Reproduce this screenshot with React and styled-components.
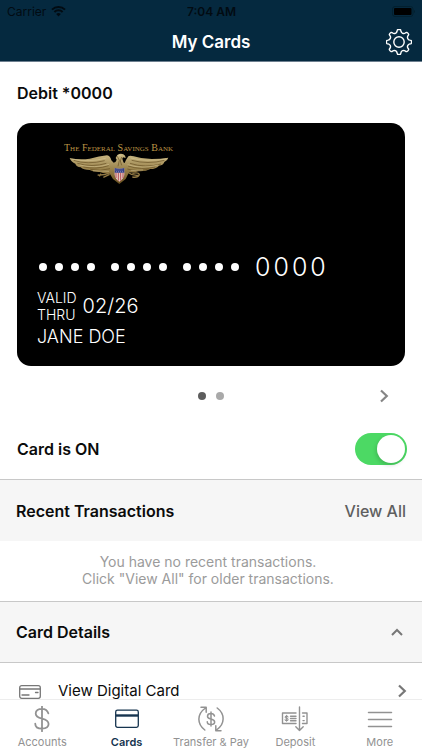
import React, { useState } from "react";
import styled, { createGlobalStyle } from "styled-components";

const GlobalStyle = createGlobalStyle`
  *, *::before, *::after { box-sizing: border-box; }
  body {
    margin: 0;
    background: #fff;
    color: #0b0b0b;
    font-family: Inter, "Liberation Sans", sans-serif;
  }
  h1, h2, p, ul { margin: 0; padding: 0; }
  button { font: inherit; color: inherit; background: none; border: 0; padding: 0; cursor: pointer; }
  a { color: inherit; text-decoration: none; }
  svg { display: block; flex: none; }
`;

const Screen = styled.div`
  display: flex;
  flex-direction: column;
  height: 100vh;
  overflow: hidden;
`;

const Header = styled.header`
  flex: none;
  background: #05293f;
  border-bottom: 1px solid #6d7f8f;
`;

const StatusBar = styled.div`
  display: grid;
  grid-template-columns: 1fr auto 1fr;
  align-items: center;
  height: 22px;
  padding: 0 6px 0 7px;
  color: #020b12;
  font-size: 12px;
`;

const Carrier = styled.span`
  display: flex;
  align-items: center;
  gap: 5px;
`;

const Clock = styled.time`
  font-weight: 600;
`;

const Battery = styled.span`
  justify-self: end;
`;

const TitleBar = styled.div`
  display: grid;
  grid-template-columns: 1fr auto 1fr;
  align-items: center;
  height: 39px;
  padding: 0 10px;
`;

const Title = styled.h1`
  grid-column: 2;
  color: #fff;
  font-size: 17px;
  font-weight: 600;
  line-height: 20px;
`;

const SettingsButton = styled.button`
  justify-self: end;
  && { color: #fff; }
`;

const Content = styled.main`
  flex: 1;
  min-height: 0;
  overflow: hidden;
`;

const Heading = styled.h2`
  font-size: 16px;
  font-weight: 600;
  line-height: 20px;
`;

const CardSection = styled.section`
  padding: 21px 17px 0;
`;

const BankCard = styled.div`
  display: flex;
  flex-direction: column;
  height: 243px;
  margin-top: 20px;
  padding: 20px 20px 0;
  border-radius: 14px;
  background: #000;
  color: #fff;
`;

const Brand = styled.div`
  display: flex;
  flex-direction: column;
  align-items: center;
  align-self: flex-start;
  margin-left: 27px;
`;

const BrandName = styled.span`
  color: #bd9445;
  font-family: "Liberation Serif", serif;
  font-size: 10px;
  font-variant: small-caps;
  line-height: 10px;
  white-space: nowrap;
`;

const CardNumber = styled.div`
  display: flex;
  align-items: center;
  gap: 16px;
  height: 30px;
  margin-top: 67px;
  padding-left: 2px;
`;

const DotGroup = styled.span`
  display: flex;
  gap: 8px;
`;

const MaskDot = styled.i`
  width: 8px;
  height: 8px;
  border-radius: 50%;
  background: #fff;
`;

const LastDigits = styled.span`
  display: flex;
  gap: 3px;
  font-size: 25px;
  font-weight: 300;
  line-height: 30px;
`;

const Validity = styled.div`
  display: flex;
  align-items: center;
  gap: 6px;
  margin-top: 7px;
`;

const ValidLabel = styled.span`
  font-size: 14px;
  font-weight: 300;
  line-height: 17px;
`;

const ValidDate = styled.span`
  font-size: 20px;
  font-weight: 300;
  line-height: 24px;
`;

const Holder = styled.span`
  margin-top: 3px;
  font-size: 18px;
  font-weight: 300;
  line-height: 22px;
`;

const Pager = styled.div`
  display: grid;
  grid-template-columns: 1fr auto 1fr;
  align-items: center;
  height: 60px;
`;

const PageDots = styled.div`
  grid-column: 2;
  display: flex;
  gap: 10px;
`;

const PageDot = styled.button`
  width: 8px;
  height: 8px;
  border-radius: 50%;
  && { background: ${(p) => (p.$active ? "#5d5d5d" : "#a9a9a9")}; }
`;

const NextButton = styled.button`
  justify-self: end;
  margin-right: 16px;
  && { color: #858585; }
`;

const PowerRow = styled.label`
  display: flex;
  align-items: center;
  justify-content: space-between;
  height: 53px;
  padding: 0 15px 7px 17px;
  font-size: 16px;
  font-weight: 600;
`;

const Toggle = styled.input`
  appearance: none;
  display: flex;
  align-items: center;
  width: 52px;
  height: 32px;
  margin: 0;
  padding: 0 2px;
  border-radius: 16px;
  background: ${(p) => (p.checked ? "#4cd964" : "#ddd")};
  cursor: pointer;

  &::before {
    content: "";
    width: 28px;
    height: 28px;
    margin-left: ${(p) => (p.checked ? "auto" : "0")};
    border-radius: 50%;
    background: #fff;
    box-shadow: -1px 2px 4px rgba(0, 0, 0, 0.16);
  }
`;

const SectionBar = styled.div`
  display: flex;
  align-items: center;
  justify-content: space-between;
  height: 62px;
  padding: 0 16px;
  border-top: 1px solid #c8c8c8;
  border-bottom: ${(p) => (p.$closed ? "1px solid #c8c8c8" : "0")};
  background: #f6f6f6;
`;

const ViewAll = styled.a`
  && { color: #5f5f5f; }
  font-size: 16px;
  font-weight: 500;
`;

const EmptyMessage = styled.p`
  padding: 12px 22px 14px 16px;
  color: #9b9b9b;
  font-size: 14px;
  line-height: 17px;
  text-align: center;
`;

const Collapse = styled.button`
  padding: 0 3px;
  && { color: #777; }
`;

const ActionRow = styled.a`
  display: flex;
  align-items: center;
  height: 56px;
  padding: 0 15px 0 19px;
  font-size: 15px;
  line-height: 16px;
`;

const ActionLabel = styled.span`
  flex: 1;
  padding-left: 17px;
`;

const IconSlot = styled.span`
  padding-top: ${(p) => (p.$low ? "2px" : "0")};
  color: #777;
`;

const TabBar = styled.nav`
  display: grid;
  grid-template-columns: repeat(5, 1fr);
  flex: none;
  height: 51px;
  border-top: 1px solid #ededed;
  background: #fff;
`;

const Tab = styled.a`
  display: flex;
  flex-direction: column;
  align-items: center;
  gap: 4px;
  padding-top: 6px;
  && { color: ${(p) => (p.$active ? "#16344f" : "#929292")}; }
  font-size: 11px;
  font-weight: ${(p) => (p.$active ? 600 : 400)};
  line-height: 13px;
  white-space: nowrap;
`;

const Stroke = ({ w, h, sw = 1, children, ...rest }) => (
  <svg width={w} height={h} viewBox={`0 0 ${w} ${h}`} fill="none" stroke="currentColor"
    strokeWidth={sw} strokeLinecap="round" strokeLinejoin="round" aria-hidden="true" {...rest}>
    {children}
  </svg>
);

const gearPath = (() => {
  const at = (r, deg) => {
    const a = (deg * Math.PI) / 180;
    return `${(13 + r * Math.sin(a)).toFixed(2)} ${(13 - r * Math.cos(a)).toFixed(2)}`;
  };
  let d = `M${at(12.4, -6)}`;
  for (let i = 0; i < 8; i++) {
    const t = i * 45;
    d += `Q${at(12.8, t)} ${at(12.4, t + 6)}`;
    d += `Q${at(12.1, t + 9)} ${at(11, t + 10)}`;
    d += `C${at(9.2, t + 14)} ${at(9, t + 31)} ${at(11, t + 35)}`;
    d += `Q${at(12.1, t + 36)} ${at(12.4, t + 39)}`;
  }
  return d + "Z";
})();

const GearIcon = () => (
  <Stroke w={26} h={26} sw={1.4}>
    <path d={gearPath} />
    <circle cx="13" cy="13" r="5.2" />
  </Stroke>
);

const WifiIcon = () => (
  <svg width="15" height="12" viewBox="0 0 15 12" fill="none" stroke="currentColor" aria-hidden="true">
    <path d="M1 4.6a9.2 9.2 0 0 1 13 0M3.4 7a5.8 5.8 0 0 1 8.2 0" strokeWidth="2" />
    <path d="M7.5 11.4 5.2 9.1a3.2 3.2 0 0 1 4.6 0z" fill="currentColor" stroke="none" />
  </svg>
);

const BatteryIcon = () => (
  <svg width="24" height="11" viewBox="0 0 24 11" aria-hidden="true">
    <rect x=".5" y=".5" width="20.5" height="10" rx="2.5" fill="none" stroke="#03202f" />
    <rect x="2" y="2" width="17.5" height="7" rx="1" fill="#000" />
    <path d="M22 4v3q1-.4 1-1.5T22 4z" fill="#03202f" />
  </svg>
);

const Eagle = () => (
  <svg width="100" height="32" viewBox="0 0 300 96" aria-hidden="true">
    <defs>
      <linearGradient id="feathers" x1="0" y1="0" x2="0" y2="1">
        <stop offset="0" stopColor="#cbb985" />
        <stop offset=".5" stopColor="#9a834c" />
        <stop offset="1" stopColor="#69501f" />
      </linearGradient>
    </defs>
    <path fill="url(#feathers)" d="M2 15Q32 22 62 17Q92 9 114 7Q124 8 127 22L134 29Q141 28 143 20L140 15L145 6Q154 0 163 4Q170 7 170 15L162 13Q158 17 162 24Q163 30 167 30Q171 20 178 10Q182 6 194 10Q218 18 248 18Q274 18 298 14Q296 22 286 27Q284 36 270 38Q261 48 244 48Q231 56 209 55Q193 60 180 58L170 78L151 93L132 78L121 60Q105 62 92 57Q74 58 62 51Q43 51 35 43Q22 42 19 32Q7 28 2 15Z" />
    <path fill="none" stroke="#665024" strokeWidth="2" d="M14 22Q55 36 107 23M25 31Q70 44 112 31M43 42Q82 50 119 38M64 49Q94 56 123 47M286 22Q237 35 188 22M276 33Q229 46 183 31M259 42Q217 52 177 39M240 48Q203 57 175 48M145 10L151 22L147 40M158 12L154 24L158 37" />
    <path fill="none" stroke="#ddcd9c" strokeWidth="1.5" d="M10 19Q62 28 110 16M32 36Q77 47 120 34M292 18Q230 27 185 15M268 36Q218 49 176 35M72 53L120 55M185 53L222 51M147 8L157 7" />
    <path fill="none" stroke="#927943" strokeWidth="4" d="M124 59Q102 68 86 66M96 62L91 70M122 64L103 73M176 58Q190 69 208 67M190 61Q209 57 211 65Q207 75 190 72" />
    <path fill="#e5c8c3" d="M137 45Q151 49 166 45V66Q163 79 151 86Q139 78 137 65Z" />
    <path fill="#343e85" d="M137 45Q151 49 166 45V59H137Z" />
    <path fill="none" stroke="#b75256" strokeWidth="3" d="M141 60V75M148 60V83M155 60V83M162 60V75" />
    <path fill="none" stroke="#d8daeb" strokeWidth="2" strokeDasharray="2 4" d="M140 51H164M142 56H163" />
  </svg>
);

const Chevron = () => (
  <Stroke w={10} h={14} sw={2.2}><path d="M2 1.5 7.8 7 2 12.5" strokeLinecap="butt" strokeLinejoin="miter" /></Stroke>
);

const ChevronUp = () => (
  <Stroke w={12} h={8} sw={2}><path d="M1 7 6 2l5 5" strokeLinecap="butt" strokeLinejoin="miter" /></Stroke>
);

const DigitalCardIcon = () => (
  <Stroke w={22} h={14} sw={1.3}>
    <rect x=".7" y=".7" width="20.6" height="12.6" rx="2" />
    <path d="M1 4h20M3 10h7M16.5 7.5h2.5" />
  </Stroke>
);

const DollarPath = "M7 7C6 3.5 3.5 2 0 2C-4 2-7 4-7 7.3C-7 11-4 12 0 13C4 14 7.3 15.3 7.3 19C7.3 22.5 4 24 0 24C-4.5 24-7.5 22-7.5 18.5M0-1V27";

const DollarIcon = () => (
  <Stroke w={26} h={26} sw={2}><path d={DollarPath} transform="translate(13 1) scale(.9)" /></Stroke>
);

const CardsIcon = () => (
  <Stroke w={26} h={26} sw={1.3}>
    <rect x="1.7" y="4.2" width="22.6" height="17.2" rx="1.8" />
    <path d="M2 9.5h22" strokeWidth="2.4" strokeLinecap="butt" />
  </Stroke>
);

const TransferIcon = () => (
  <Stroke w={26} h={26} sw={1.5}>
    <path d="M6.8 24C-1.2 18-1.2 8 7.5 2M3 1.3l5.2-.1v5M19.2 2C27.2 8 27.2 18 18.5 24M23 24.7l-5.2.1v-5" />
    <path d={DollarPath} transform="translate(13 6.5) scale(.5)" strokeWidth="3" />
  </Stroke>
);

const DepositIcon = () => (
  <Stroke w={28} h={26} sw={1.4}>
    <path d="M15 7H1.5v10.5H15M21.5 7H26v10.5h-4.5M9.5 10.3H15M9.5 12.5H15M9.5 14.8H15M22 10.3h1.2M22 14.6h1.2" />
    <path d="M18.5 1v23.5M14.8 20.8l3.7 3.7 3.7-3.7" />
    <path d={DollarPath} transform="translate(5.6 9.6) scale(.21)" strokeWidth="5" />
  </Stroke>
);

const MoreIcon = () => (
  <Stroke w={26} h={26} sw={1.5}><path d="M1.5 6.5h23M1.5 13.5h23M1.5 20.5h23" /></Stroke>
);

const tabs = [
  { label: "Accounts", Icon: DollarIcon },
  { label: "Cards", Icon: CardsIcon, active: true },
  { label: "Transfer & Pay", Icon: TransferIcon },
  { label: "Deposit", Icon: DepositIcon },
  { label: "More", Icon: MoreIcon },
];

export default function App() {
  const [on, setOn] = useState(true);
  return (
    <>
      <GlobalStyle />
      <Screen>
        <Header>
          <StatusBar>
            <Carrier>Carrier <WifiIcon /></Carrier>
            <Clock>7:04 AM</Clock>
            <Battery><BatteryIcon /></Battery>
          </StatusBar>
          <TitleBar>
            <Title>My Cards</Title>
            <SettingsButton aria-label="Settings"><GearIcon /></SettingsButton>
          </TitleBar>
        </Header>

        <Content>
          <CardSection>
            <Heading>Debit *0000</Heading>
            <BankCard>
              <Brand>
                <BrandName>The Federal Savings Bank</BrandName>
                <Eagle />
              </Brand>
              <CardNumber>
                {[0, 1, 2].map((g) => (
                  <DotGroup key={g}>
                    {[0, 1, 2, 3].map((d) => <MaskDot key={d} />)}
                  </DotGroup>
                ))}
                <LastDigits>
                  {[..."0000"].map((digit, i) => <span key={i}>{digit}</span>)}
                </LastDigits>
              </CardNumber>
              <Validity>
                <ValidLabel>VALID<br />THRU</ValidLabel>
                <ValidDate>02/26</ValidDate>
              </Validity>
              <Holder>JANE DOE</Holder>
            </BankCard>
            <Pager>
              <PageDots>
                <PageDot $active aria-label="Card 1" />
                <PageDot aria-label="Card 2" />
              </PageDots>
              <NextButton aria-label="Next card"><Chevron /></NextButton>
            </Pager>
          </CardSection>

          <PowerRow>
            Card is {on ? "ON" : "OFF"}
            <Toggle type="checkbox" role="switch" checked={on} onChange={() => setOn(!on)} />
          </PowerRow>

          <SectionBar>
            <Heading>Recent Transactions</Heading>
            <ViewAll href="#transactions">View All</ViewAll>
          </SectionBar>
          <EmptyMessage>
            You have no recent transactions.<br />
            Click "View All" for older transactions.
          </EmptyMessage>

          <SectionBar $closed>
            <Heading>Card Details</Heading>
            <Collapse aria-label="Collapse card details"><ChevronUp /></Collapse>
          </SectionBar>
          <ActionRow href="#digital-card">
            <IconSlot $low><DigitalCardIcon /></IconSlot>
            <ActionLabel>View Digital Card</ActionLabel>
            <IconSlot><Chevron /></IconSlot>
          </ActionRow>
        </Content>

        <TabBar>
          {tabs.map(({ label, Icon, active }) => (
            <Tab key={label} href={`#${label}`} $active={active} aria-current={active ? "page" : undefined}>
              <Icon />
              {label}
            </Tab>
          ))}
        </TabBar>
      </Screen>
    </>
  );
}
